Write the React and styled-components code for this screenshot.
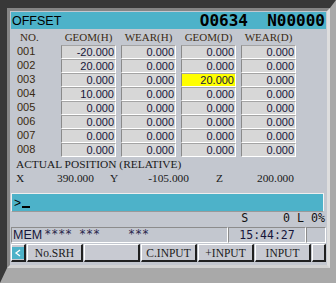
import React from "react"
import styled, { createGlobalStyle } from "styled-components"

const GlobalStyle = createGlobalStyle`
  html, body {
    margin: 0;
    padding: 0;
    background: #a9a9a9;
    overflow: hidden;
  }
`

const colors = {
  dark: "#383838",
  outer: "#a9a9a9",
  panel: "#c3c7cf",
  cyan: "#4db2c9",
  cell: "#d7d7d7",
  label: "#3a2a12",
  value: "#16163a",
}

const Frame = styled.div`
  display: flex;
  width: 336px;
  height: 283px;
  box-sizing: border-box;
  border-style: solid;
  border-width: 8px 6px 15px 7px;
  border-color: ${colors.dark} ${colors.outer} ${colors.outer} ${colors.dark};
`

const Panel = styled.div`
  flex: 1;
  display: flex;
  flex-direction: column;
  border-style: solid;
  border-width: 3px;
  border-color: #858585 #dedede #d2d2d2 #858585;
  background: ${colors.panel};
  padding: 1px 1px 0 1px;
`

const TitleBar = styled.div`
  display: flex;
  align-items: center;
  justify-content: space-between;
  height: 17px;
  background: ${colors.cyan};
  padding: 0 1px 0 1px;
`

const Title = styled.span`
  font-family: "Liberation Sans", Arial, sans-serif;
  font-size: 12.5px;
  color: #000;
`

const ProgramNo = styled.span`
  font-family: "DejaVu Sans Mono", monospace;
  font-weight: bold;
  font-size: 16px;
  white-space: pre;
  color: #000;
  line-height: 17px;
`

const Table = styled.div`
  display: grid;
  grid-template-columns: 45px 55px 55px 55px 55px;
  column-gap: 5px;
`

const HeadCell = styled.div`
  height: 16px;
  line-height: 16px;
  font-family: "Liberation Serif", "Times New Roman", serif;
  font-size: 11px;
  color: ${colors.label};
  text-align: ${p => (p.$left ? "left" : "center")};
  padding-left: ${p => (p.$left ? "9px" : "0")};
`

const RowNo = styled.div`
  height: 14px;
  line-height: 13px;
  padding-left: 6px;
  font-family: "Liberation Sans", Arial, sans-serif;
  font-size: 11px;
  color: ${colors.label};
`

const Cell = styled.div`
  height: 14px;
  box-sizing: border-box;
  border-style: solid;
  border-width: 1px;
  border-color: #a4a4a4 #ffffff #ffffff #8a8a8a;
  background: ${p => (p.$active ? "#ffff00" : colors.cell)};
  font-family: "Liberation Sans", Arial, sans-serif;
  font-size: 11px;
  line-height: 12px;
  text-align: right;
  padding-right: 1px;
  color: ${colors.value};
`

const Caption = styled.div`
  height: 14px;
  line-height: 14px;
  padding-left: 5px;
  font-family: "Liberation Serif", "Times New Roman", serif;
  font-size: 11.4px;
  color: #1a1a1a;
`

const AxisRow = styled.div`
  display: flex;
  height: 15px;
  line-height: 15px;
  padding-left: 5px;
  font-family: "Liberation Serif", "Times New Roman", serif;
  font-size: 11.4px;
  color: #1a1a1a;
`

const Axis = styled.div`
  display: flex;
  justify-content: space-between;
  width: ${p => p.$w}px;
  margin-right: ${p => p.$mr || 0}px;
`

const InputBar = styled.div`
  display: flex;
  align-items: center;
  margin: 7px 2px 0 0;
  height: 19px;
  box-sizing: border-box;
  border-style: solid;
  border-width: 1px;
  border-color: #eeeeee #f4f4f4 #9a9a9a #eeeeee;
  background: ${colors.cyan};
  padding-left: 2px;
  font-family: "Liberation Sans", Arial, sans-serif;
  font-size: 12px;
  color: #000;
`

const Cursor = styled.span`
  display: inline-block;
  width: 8px;
  height: 2px;
  background: #000;
  margin: 9px 0 0 1px;
`

const Status = styled.div`
  height: 15px;
  line-height: 13px;
  text-align: right;
  padding-right: 1px;
  font-family: "DejaVu Sans Mono", monospace;
  font-size: 11.6px;
  white-space: pre;
  color: #111;
`

const InfoRow = styled.div`
  display: grid;
  grid-template-columns: 217px 78px 20px;
  height: 16px;
`

const InfoBox = styled.div`
  box-sizing: border-box;
  border-style: solid;
  border-width: 1px;
  border-color: #8c8c8c #ffffff #ffffff #8c8c8c;
  display: flex;
  align-items: center;
  justify-content: ${p => (p.$center ? "center" : "flex-start")};
  padding-left: ${p => (p.$center ? 0 : 1)}px;
  font-family: ${p =>
    p.$mono ? `"DejaVu Sans Mono", monospace` : `"Liberation Sans", Arial, sans-serif`};
  font-size: ${p => (p.$mono ? "11.5px" : "12.5px")};
  color: ${colors.value};
  white-space: pre;
`

const Stars = styled.span`
  font-family: "DejaVu Sans Mono", monospace;
  font-size: 11.6px;
  margin-left: 2px;
  color: #28284a;
  align-self: flex-start;
  line-height: 12px;
`

const SoftKeys = styled.div`
  display: grid;
  grid-template-columns: 15px repeat(5, 56px) 14px;
  column-gap: 1px;
  margin-top: 1px;
  height: 18px;
`

const SoftKey = styled.div`
  box-sizing: border-box;
  display: flex;
  align-items: center;
  justify-content: center;
  border-style: solid;
  border-width: 1px 2px 2px 1px;
  border-color: #ffffff #202020 #202020 #ffffff;
  background: #c8cad2;
  font-family: "Liberation Serif", "Times New Roman", serif;
  font-size: 11.5px;
  color: #1a1a1a;
`

const Arrow = styled.div`
  width: 12px;
  height: 12px;
  background: ${colors.cyan};
  display: flex;
  align-items: center;
  justify-content: center;
`

const rows = [
  ["001", "-20.000", "0.000", "0.000", "0.000"],
  ["002", "20.000", "0.000", "0.000", "0.000"],
  ["003", "0.000", "0.000", "20.000", "0.000"],
  ["004", "10.000", "0.000", "0.000", "0.000"],
  ["005", "0.000", "0.000", "0.000", "0.000"],
  ["006", "0.000", "0.000", "0.000", "0.000"],
  ["007", "0.000", "0.000", "0.000", "0.000"],
  ["008", "0.000", "0.000", "0.000", "0.000"],
]

export default function App() {
  return (
    <>
      <GlobalStyle />
      <Frame>
        <Panel>
          <TitleBar>
            <Title>OFFSET</Title>
            <ProgramNo>{"O0634  N00000"}</ProgramNo>
          </TitleBar>

          <Table>
            <HeadCell $left>NO.</HeadCell>
            <HeadCell>GEOM(H)</HeadCell>
            <HeadCell>WEAR(H)</HeadCell>
            <HeadCell>GEOM(D)</HeadCell>
            <HeadCell>WEAR(D)</HeadCell>
            {rows.map(([no, ...vals]) => (
              <React.Fragment key={no}>
                <RowNo>{no}</RowNo>
                {vals.map((v, i) => (
                  <Cell key={i} $active={no === "003" && i === 2}>
                    {v}
                  </Cell>
                ))}
              </React.Fragment>
            ))}
          </Table>

          <Caption>ACTUAL POSITION (RELATIVE)</Caption>
          <AxisRow>
            <Axis $w={78} $mr={16}>
              <span>X</span>
              <span>390.000</span>
            </Axis>
            <Axis $w={79} $mr={27}>
              <span>Y</span>
              <span>-105.000</span>
            </Axis>
            <Axis $w={78}>
              <span>Z</span>
              <span>200.000</span>
            </Axis>
          </AxisRow>

          <InputBar>
            &gt;
            <Cursor />
          </InputBar>

          <Status>{"S     0 L 0%"}</Status>

          <InfoRow>
            <InfoBox>
              MEM<Stars>{"**** ***    ***"}</Stars>
            </InfoBox>
            <InfoBox $center $mono>
              15:44:27
            </InfoBox>
            <InfoBox />
          </InfoRow>

          <SoftKeys>
            <SoftKey>
              <Arrow>
                <svg width="8" height="8" viewBox="0 0 8 8">
                  <path d="M6 1 L2 4 L6 7" stroke="#fff" strokeWidth="1.3" fill="none" />
                </svg>
              </Arrow>
            </SoftKey>
            <SoftKey>No.SRH</SoftKey>
            <SoftKey />
            <SoftKey>C.INPUT</SoftKey>
            <SoftKey>+INPUT</SoftKey>
            <SoftKey>INPUT</SoftKey>
            <SoftKey />
          </SoftKeys>
        </Panel>
      </Frame>
    </>
  )
}
